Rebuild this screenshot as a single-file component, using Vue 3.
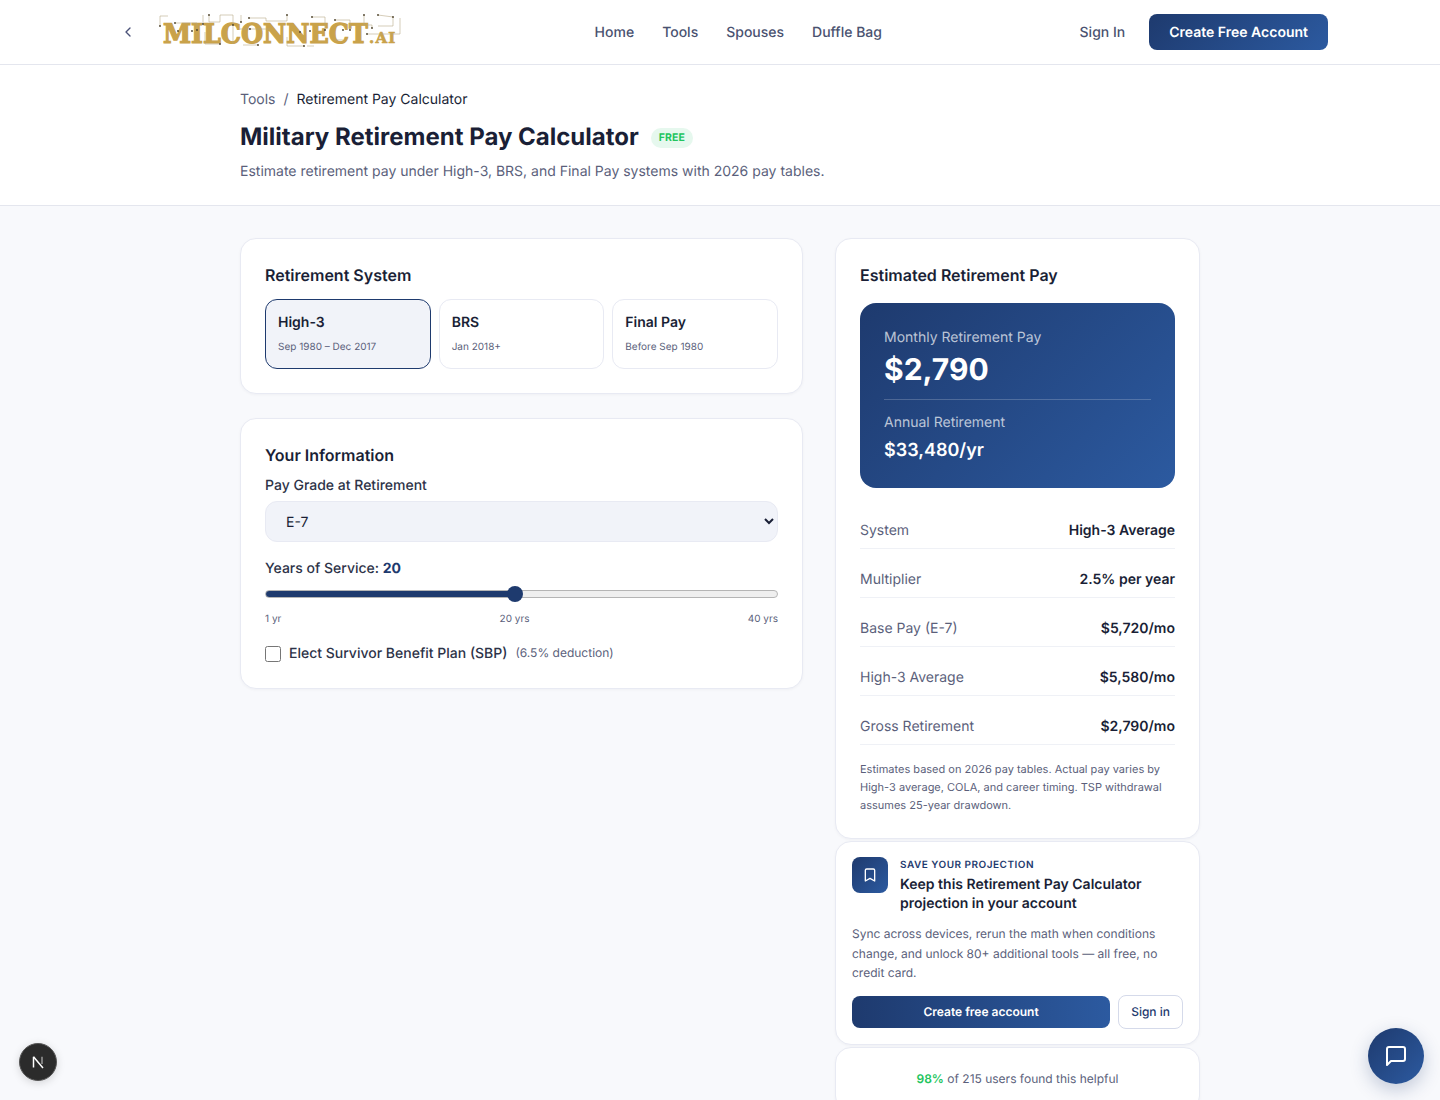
<script setup>
import { ref, computed } from "vue";

const navLinks = ["Home", "Tools", "Spouses", "Duffle Bag"];

const systems = [
  { id: "high3", name: "High-3", dates: "Sep 1980 – Dec 2017" },
  { id: "brs", name: "BRS", dates: "Jan 2018+" },
  { id: "final", name: "Final Pay", dates: "Before Sep 1980" },
];

const grades = ["E-5", "E-6", "E-7", "E-8", "E-9", "O-3", "O-4", "O-5", "O-6"];

const system = ref("high3");
const grade = ref("E-7");
const years = ref(20);
const sbp = ref(false);

const rows = [
  { label: "System", value: "High-3 Average" },
  { label: "Multiplier", value: "2.5% per year" },
  { label: "Base Pay (E-7)", value: "$5,720/mo" },
  { label: "High-3 Average", value: "$5,580/mo" },
  { label: "Gross Retirement", value: "$2,790/mo" },
];

const circuitLines = [
  "M168 16H160V26",
  "M175 23H197V30",
  "M203 15V24M209 15V22H220V15H233V25",
  "M205 32V44H220",
  "M233 25V44",
  "M241 15V22",
  "M240 29H270",
  "M249 18H266V21H287V15",
  "M243 45H258",
  "M287 37V46H304M307 46H314",
  "M312 17H325V30",
  "M335 20H350V30M335 40H343",
  "M364 15V25H372V28",
  "M378 15L393 17V26H378",
  "M400 18V34H367",
];

const circuitDots = [
  [160, 26], [175, 23], [197, 30], [203, 24], [209, 15], [233, 25], [220, 44], [241, 22],
  [249, 18], [287, 15], [258, 45], [304, 46], [312, 17], [325, 30], [335, 20], [350, 30],
  [364, 15], [372, 28], [378, 15], [393, 17], [367, 34], [178, 31], [192, 31], [250, 29],
  [300, 32], [310, 31], [343, 30],
];

const sliderFill = computed(() => {
  const pct = ((years.value - 1) / 39) * 100;
  return `linear-gradient(to right, #1e3a6e ${pct}%, #efefef ${pct}%)`;
});
</script>

<template>
  <div class="page">
    <header class="topbar">
      <div class="topbar-left">
        <button class="back-btn" aria-label="Back">
          <svg width="16" height="16" viewBox="0 0 24 24" fill="none" stroke="currentColor" stroke-width="2" stroke-linecap="round" stroke-linejoin="round">
            <path d="m15 18-6-6 6-6" />
          </svg>
        </button>
        <svg class="logo" width="244" height="40" viewBox="158 12 244 40">
          <text transform="translate(163 43) scale(0.94 1)" class="logo-main">MILCONNECT</text>
          <text x="369" y="43" class="logo-ai">.AI</text>
          <path v-for="(d, i) in circuitLines" :key="i" :d="d" fill="none" stroke="#b5a582" stroke-opacity="0.7" stroke-width="0.8" />
          <circle v-for="(c, i) in circuitDots" :key="'dot' + i" :cx="c[0]" :cy="c[1]" r="0.9" fill="#4a3f28" />
        </svg>
      </div>
      <nav class="nav">
        <a v-for="link in navLinks" :key="link" class="nav-link">{{ link }}</a>
      </nav>
      <div class="topbar-right">
        <a class="nav-link">Sign In</a>
        <button class="cta">Create Free Account</button>
      </div>
    </header>

    <section class="page-head">
      <div class="container">
        <div class="crumbs">
          <span class="crumb-link">Tools</span>
          <span class="crumb-sep">/</span>
          <span class="crumb-current">Retirement Pay Calculator</span>
        </div>
        <div class="title-row">
          <h1>Military Retirement Pay Calculator</h1>
          <span class="free">FREE</span>
        </div>
        <p class="subtitle">Estimate retirement pay under High-3, BRS, and Final Pay systems with 2026 pay tables.</p>
      </div>
    </section>

    <main class="container columns">
      <div class="left-col">
        <section class="card">
          <h2>Retirement System</h2>
          <div class="systems">
            <button
              v-for="s in systems"
              :key="s.id"
              class="system"
              :class="{ active: system === s.id }"
              @click="system = s.id"
            >
              <span class="system-name">{{ s.name }}</span>
              <span class="system-dates">{{ s.dates }}</span>
            </button>
          </div>
        </section>

        <section class="card info">
          <h2>Your Information</h2>
          <label class="field-label" for="grade">Pay Grade at Retirement</label>
          <select id="grade" v-model="grade" class="select">
            <option v-for="g in grades" :key="g" :value="g">{{ g }}</option>
          </select>

          <label class="field-label years" for="years">Years of Service: <strong>{{ years }}</strong></label>
          <input id="years" v-model.number="years" class="slider" type="range" min="1" max="40" :style="{ background: sliderFill }" />
          <div class="slider-scale">
            <span>1 yr</span>
            <span>20 yrs</span>
            <span>40 yrs</span>
          </div>

          <label class="sbp">
            <input v-model="sbp" type="checkbox" />
            <span class="sbp-text">Elect Survivor Benefit Plan (SBP)</span>
            <span class="sbp-note">(6.5% deduction)</span>
          </label>
        </section>
      </div>

      <div class="right-col">
        <section class="card result">
          <h2>Estimated Retirement Pay</h2>
          <div class="hero">
            <div class="hero-label">Monthly Retirement Pay</div>
            <div class="hero-amount">$2,790</div>
            <div class="hero-rule"></div>
            <div class="hero-label">Annual Retirement</div>
            <div class="hero-annual">$33,480/yr</div>
          </div>
          <div v-for="row in rows" :key="row.label" class="row">
            <span class="row-label">{{ row.label }}</span>
            <span class="row-value">{{ row.value }}</span>
          </div>
          <p class="note">Estimates based on 2026 pay tables. Actual pay varies by High-3 average, COLA, and career timing. TSP withdrawal assumes 25-year drawdown.</p>
        </section>

        <section class="card save">
          <div class="save-top">
            <div class="save-icon">
              <svg width="16" height="16" viewBox="0 0 24 24" fill="none" stroke="currentColor" stroke-width="2" stroke-linecap="round" stroke-linejoin="round">
                <path d="m19 21-7-4-7 4V5a2 2 0 0 1 2-2h10a2 2 0 0 1 2 2v16z" />
              </svg>
            </div>
            <div>
              <div class="save-kicker">SAVE YOUR PROJECTION</div>
              <div class="save-title">Keep this Retirement Pay Calculator projection in your account</div>
            </div>
          </div>
          <p class="save-body">Sync across devices, rerun the math when conditions change, and unlock 80+ additional tools — all free, no credit card.</p>
          <div class="save-actions">
            <button class="save-primary">Create free account</button>
            <button class="save-secondary">Sign in</button>
          </div>
        </section>

        <section class="card helpful">
          <p><strong>98%</strong> of 215 users found this helpful</p>
        </section>
      </div>
    </main>

    <button class="next-badge" aria-label="Next.js dev tools">
      <svg width="14" height="14" viewBox="0 0 14 14" fill="none" stroke-width="1.5">
        <path d="M2.5 12.5V1.8" stroke="#fff" />
        <path d="M2.5 1.8 12 13" stroke="#fff" />
        <path d="M11 1.8V9" stroke="#9a9a9a" />
      </svg>
    </button>

    <button class="chat" aria-label="Open chat">
      <svg width="24" height="24" viewBox="0 0 24 24" fill="none" stroke="currentColor" stroke-width="2" stroke-linecap="round" stroke-linejoin="round">
        <path d="M21 15a2 2 0 0 1-2 2H7l-4 4V5a2 2 0 0 1 2-2h14a2 2 0 0 1 2 2z" />
      </svg>
    </button>
  </div>
</template>

<style scoped>
.page {
  height: 100vh;
  overflow: hidden;
  background: #f8f9fc;
  color: #1a1f36;
  font-family: Inter, "Liberation Sans", sans-serif;
  text-rendering: geometricPrecision;
}

button {
  font-family: inherit;
  cursor: pointer;
  text-rendering: geometricPrecision;
}

.topbar {
  height: 64px;
  padding: 0 112px;
  display: flex;
  align-items: center;
  justify-content: space-between;
  background: #fff;
  border-bottom: 1px solid #e4e6ee;
}

.topbar-left {
  display: flex;
  align-items: center;
  gap: 14px;
  width: 290px;
}

.back-btn {
  width: 32px;
  height: 32px;
  display: flex;
  align-items: center;
  justify-content: center;
  padding: 0;
  border: none;
  background: none;
  color: #4a5178;
}

.logo {
  display: block;
  flex: none;
}

.logo-main,
.logo-ai {
  font-family: "DejaVu Serif", serif;
  font-weight: 700;
  fill: #c9a24a;
  stroke: #c9a24a;
}

.logo-main {
  font-size: 27px;
  stroke-width: 1.2;
}

.logo-ai {
  font-size: 15px;
  letter-spacing: 1.2px;
  stroke-width: 0.6;
}

.nav {
  display: flex;
  gap: 28px;
  margin-right: 5px;
}

.nav-link {
  font-size: 14px;
  font-weight: 500;
  color: #4a5270;
}

.topbar-right {
  display: flex;
  align-items: center;
  gap: 24px;
}

.cta {
  height: 36px;
  padding: 0 20px;
  border: none;
  border-radius: 8px;
  background: linear-gradient(135deg, #1e3a6e, #2c5aa0);
  color: #fff;
  font-size: 14px;
  font-weight: 600;
}

.container {
  width: 960px;
  margin: 0 auto;
}

.page-head {
  height: 141px;
  box-sizing: border-box;
  padding-top: 24px;
  background: #fff;
  border-bottom: 1px solid #e4e6ee;
}

.crumbs {
  display: flex;
  gap: 8px;
  font-size: 14px;
  line-height: 21px;
  color: #5b5f7b;
}

.crumb-current {
  color: #1a1f36;
}

.title-row {
  display: flex;
  align-items: center;
  gap: 12px;
  margin-top: 11px;
}

h1 {
  margin: 0;
  font-size: 24px;
  line-height: 32px;
  font-weight: 700;
  color: #1a1f36;
}

.free {
  margin-top: 1px;
  padding: 0 8px;
  height: 20px;
  line-height: 20px;
  border-radius: 10px;
  background: #e6f8ee;
  color: #22c55e;
  font-size: 10.5px;
  font-weight: 700;
  letter-spacing: 0.1px;
}

.subtitle {
  margin: 8px 0 0;
  font-size: 14px;
  line-height: 21px;
  color: #5b5f7b;
}

.columns {
  display: grid;
  grid-template-columns: 563px 365px;
  gap: 32px;
  align-items: start;
  padding-top: 32px;
}

.left-col {
  display: flex;
  flex-direction: column;
  gap: 24px;
}

.right-col {
  display: flex;
  flex-direction: column;
  gap: 2px;
}

.card {
  box-sizing: border-box;
  padding: 24px;
  background: #fff;
  border: 1px solid #e8eaf3;
  border-radius: 16px;
  box-shadow: 0 1px 3px rgba(26, 31, 54, 0.04);
}

h2 {
  margin: 0 0 12px;
  font-size: 16px;
  line-height: 24px;
  font-weight: 600;
  color: #1a1f36;
}

.info h2 {
  margin-bottom: 8px;
}

.result h2 {
  margin-bottom: 16px;
}

.systems {
  display: grid;
  grid-template-columns: repeat(3, 1fr);
  gap: 8px;
}

.system {
  height: 70px;
  box-sizing: border-box;
  padding: 12px;
  display: flex;
  flex-direction: column;
  gap: 6px;
  text-align: left;
  background: #fff;
  border: 1px solid #e8eaf3;
  border-radius: 12px;
  color: #1a1f36;
}

.system.active {
  background: #f1f3f9;
  border-color: #1e3a6e;
}

.system-name {
  font-size: 14px;
  line-height: 21px;
  font-weight: 600;
}

.system-dates {
  font-size: 10px;
  line-height: 16px;
  color: #5b5f7b;
}

.field-label {
  display: block;
  font-size: 14px;
  line-height: 21px;
  font-weight: 500;
  color: #2d3348;
}

.field-label strong {
  color: #1e3a6e;
  font-weight: 700;
}

.select {
  display: block;
  width: 100%;
  height: 41px;
  margin-top: 5px;
  padding: 1px 16px 0;
  box-sizing: border-box;
  background: #f1f3f9;
  border: 1px solid #e8eaf3;
  border-radius: 12px;
  color: #1a1f36;
  font-family: inherit;
  font-size: 14px;
  line-height: 21px;
  text-rendering: geometricPrecision;
}

.years {
  margin-top: 16px;
}

.slider {
  display: block;
  width: 100%;
  height: 8px;
  margin: 11px 0 0;
  appearance: none;
  -webkit-appearance: none;
  border: 1px solid #b5b5b5;
  border-radius: 4px;
  box-sizing: border-box;
}

.slider::-webkit-slider-thumb {
  -webkit-appearance: none;
  width: 16px;
  height: 16px;
  border-radius: 50%;
  background: #1e3a6e;
  border: none;
}

.slider-scale {
  display: flex;
  justify-content: space-between;
  margin-top: 13px;
  font-size: 10px;
  line-height: 16px;
  color: #5b5f7b;
}

.sbp {
  display: flex;
  align-items: center;
  margin-top: 16px;
  font-size: 14px;
  line-height: 21px;
}

.sbp input {
  width: 16px;
  height: 16px;
  margin: 0 8px 0 0;
}

.sbp-text {
  font-weight: 500;
  color: #2d3348;
}

.sbp-note {
  margin: -3px 0 0 8px;
  font-size: 12px;
  color: #5b5f7b;
}

.hero {
  height: 185px;
  box-sizing: border-box;
  padding: 24px;
  margin-bottom: 24px;
  border-radius: 16px;
  background: linear-gradient(135deg, #1e3a6e, #2c5aa0);
  color: #fff;
}

.hero-label {
  font-size: 14px;
  line-height: 21px;
  color: rgba(255, 255, 255, 0.7);
}

.hero-amount {
  margin-top: 2px;
  font-size: 30px;
  line-height: 40px;
  font-weight: 700;
}

.hero-rule {
  height: 1px;
  margin: 9px 0 12px;
  background: rgba(255, 255, 255, 0.2);
}

.hero-annual {
  margin-top: 4px;
  font-size: 18px;
  line-height: 28px;
  font-weight: 600;
}

.row {
  display: flex;
  justify-content: space-between;
  padding: 8px 0 7px;
  margin-bottom: 12px;
  font-size: 14px;
  line-height: 21px;
  border-bottom: 1px solid #eff1f6;
}

.row-label {
  color: #5b5f7b;
}

.row-value {
  font-weight: 600;
  color: #1a1f36;
}

.note {
  margin: 15px 0 0;
  font-size: 11px;
  line-height: 18px;
  color: #5b5f7b;
}

.save {
  padding: 15px 16px;
}

.save-top {
  display: flex;
  gap: 12px;
}

.save-icon {
  flex: none;
  width: 36px;
  height: 36px;
  display: flex;
  align-items: center;
  justify-content: center;
  border-radius: 8px;
  background: linear-gradient(135deg, #1e3a6e, #2c5aa0);
  color: #fff;
}

.save-kicker {
  margin-top: 1px;
  font-size: 10px;
  line-height: 14px;
  font-weight: 600;
  letter-spacing: 0.5px;
  color: #1e3a6e;
}

.save-title {
  margin-top: 3px;
  font-size: 14px;
  line-height: 19px;
  font-weight: 600;
  color: #1a1f36;
}

.save-body {
  margin: 11px 0 0;
  font-size: 12px;
  line-height: 19.5px;
  color: #5b5f7b;
}

.save-actions {
  display: flex;
  gap: 8px;
  margin-top: 12px;
  align-items: center;
}

.save-primary {
  flex: 1;
  height: 32px;
  padding: 0 0 1px;
  border: none;
  border-radius: 8px;
  background: linear-gradient(90deg, #1e3a6e, #2c5aa0);
  color: #fff;
  font-size: 12px;
  font-weight: 600;
}

.save-secondary {
  height: 34px;
  padding: 0 12px 1px;
  background: #fff;
  border: 1px solid #d5daea;
  border-radius: 8px;
  color: #1e3a6e;
  font-size: 12px;
  font-weight: 500;
}

.helpful {
  padding: 23px 24px 24px;
  text-align: center;
  font-size: 12px;
  line-height: 16px;
  color: #5b5f7b;
}

.helpful p {
  margin: 0;
}

.helpful strong {
  color: #22c55e;
  font-weight: 600;
}

.next-badge {
  position: fixed;
  left: 19px;
  bottom: 19px;
  width: 38px;
  height: 38px;
  display: flex;
  align-items: center;
  justify-content: center;
  padding: 0;
  border: 1px solid #555;
  border-radius: 50%;
  background: #2b2b2b;
  box-shadow: 0 2px 8px rgba(0, 0, 0, 0.15);
}

.chat {
  position: fixed;
  right: 16px;
  bottom: 16px;
  width: 56px;
  height: 56px;
  display: flex;
  align-items: center;
  justify-content: center;
  padding: 0;
  border: none;
  border-radius: 50%;
  background: linear-gradient(135deg, #1e3a6e, #2c5aa0);
  color: #fff;
  box-shadow: 0 6px 18px rgba(30, 58, 110, 0.25);
}
</style>
